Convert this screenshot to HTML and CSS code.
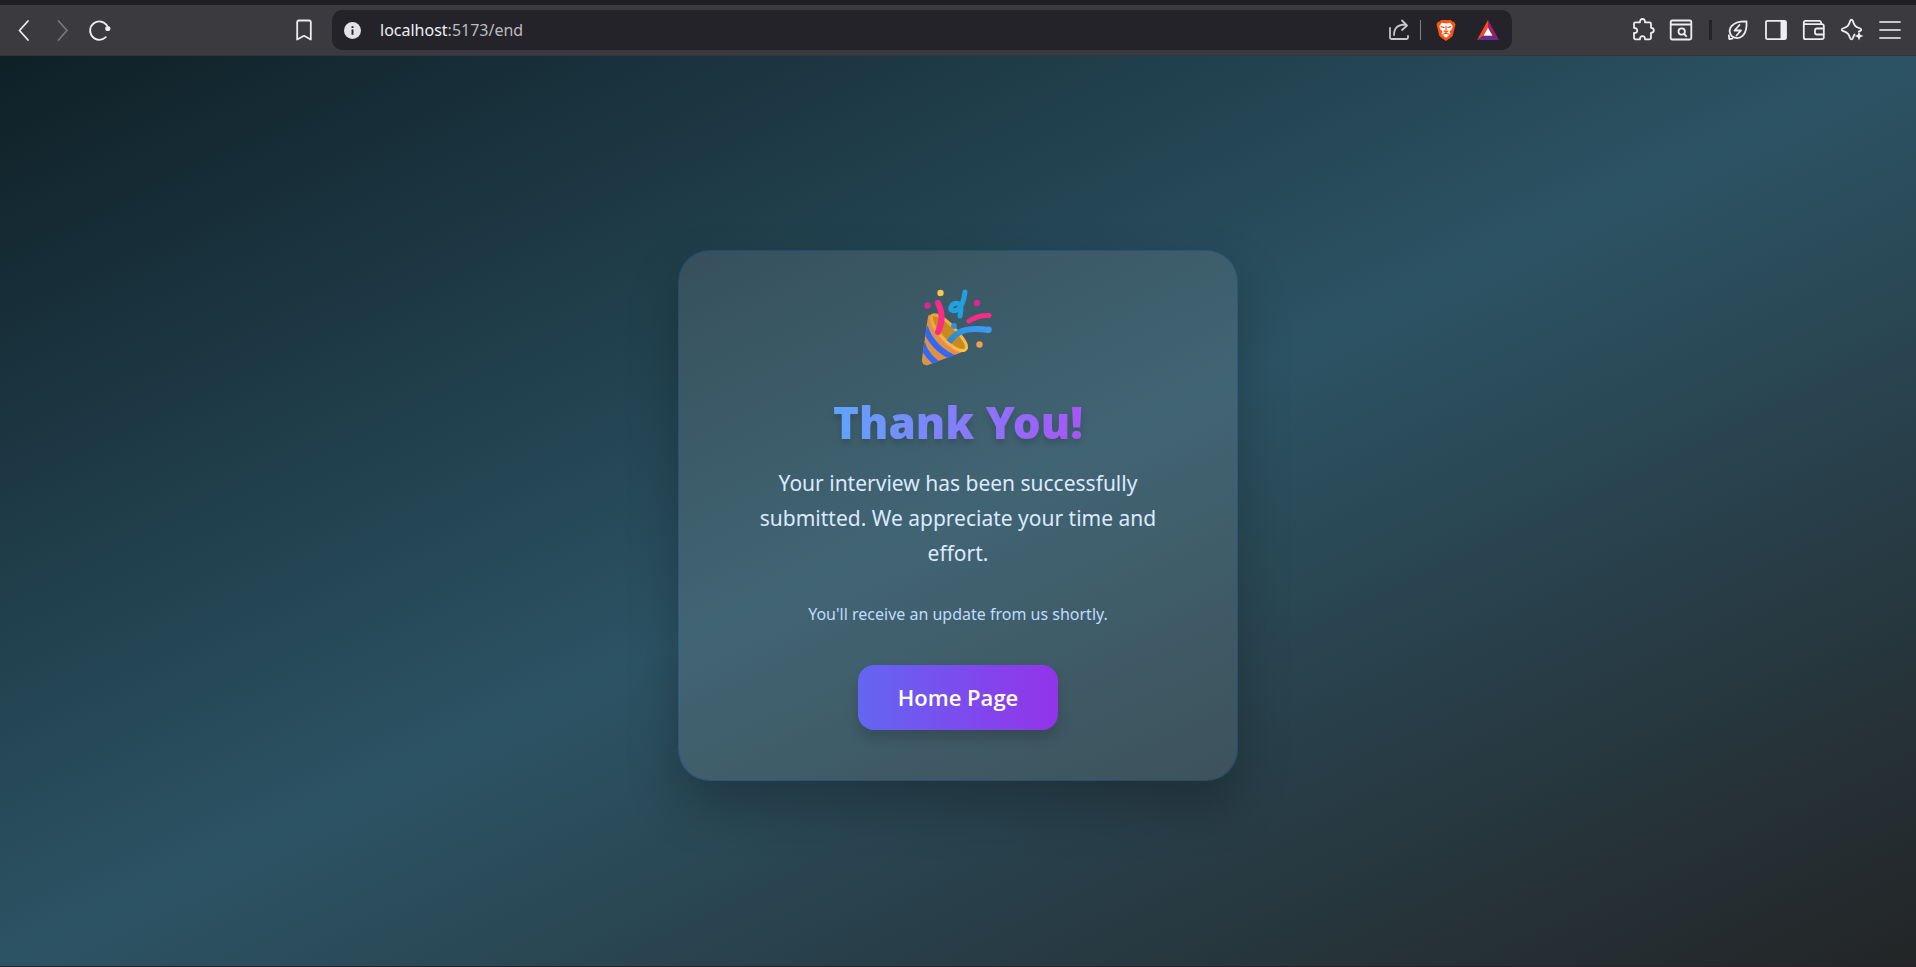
FILE: index.html
```html
<!DOCTYPE html>
<html lang="en">
<head>
<meta charset="utf-8">
<title>Thank You</title>
<link rel="stylesheet" href="styles.css">
</head>
<body>
<header class="browser-bar">
  <nav class="nav-tools" aria-label="Navigation">
    <button class="tool" aria-label="Back"><svg viewBox="0 0 24 24"><path d="M16 3 7.500 12.500 16 22"/></svg></button>
    <button class="tool tool-dim" aria-label="Forward"><svg viewBox="0 0 24 24"><path d="M8.500 3 17 12.500 8.500 22"/></svg></button>
    <button class="tool" aria-label="Reload"><svg viewBox="0 0 24 24"><path d="M17.800 19.200A9.200 9.200 0 1 1 19 7.500"/><circle class="solid" cx="19.800" cy="10.500" r="2.600"/></svg></button>
  </nav>
  <button class="tool bookmark" aria-label="Bookmark"><svg viewBox="0 0 24 24"><path d="M5.200 21.500V4.200a1.700 1.700 0 0 1 1.700-1.700h10.200a1.700 1.700 0 0 1 1.700 1.700v17.300L12 17.800z"/></svg></button>
  <div class="address">
    <button class="tool info" aria-label="Site information"><svg viewBox="0 0 16 16"><circle class="disc" cx="8" cy="8" r="8"/><path class="mark" d="M8 7v5M8 4v1.600"/></svg></button>
    <label class="url" for="url"><span class="host">localhost</span>:5173/end</label>
    <input id="url" class="url-field" type="text" aria-label="Address">
    <div class="address-tools">
      <button class="tool soft" aria-label="Share"><svg viewBox="0 0 24 24"><path d="M3 10v9.500A1.500 1.500 0 0 0 4.500 21H19.500A1.500 1.500 0 0 0 21 19.500V18M7 17c0-7 4-10.500 12-10.500M15 2.500l5 5-5 4.500"/></svg></button>
      <span class="divider"></span>
      <button class="tool shields" aria-label="Shields"><svg class="color-icon" viewBox="0 0 20 23"><path fill="#fb5412" d="M5 1h10l2 2 1.500-.2L20 6l-.7 2L17 17.500 15.500 19 10 23l-5.500-4L3 17.500.7 8 0 6l1.500-3.200L3 3z"/><path fill="#fff" d="M5.500 4 10 4.800 14.500 4 17 7.500l-.7 2.500-2.600 3.300 1 2L12.500 17.500 10 19.500 7.500 17.500 5.300 15.300l1-2L3.700 10 3 7.500z"/><path fill="none" stroke="#fb5412" stroke-width="1.200" d="M5 8l3 1M15 8l-3 1M10 7.500v6M8 12.500l2 1.500 2-1.500M7 16l3-1.200L13 16"/></svg></button>
      <button class="tool" aria-label="Rewards"><svg class="color-icon" viewBox="0 0 22 20"><path fill="#ff4724" d="M11 0 0 20l6.500-4.200L11 7.500z"/><path fill="#9e1f63" d="M11 0l11 20-6.500-4.200L11 7.500z"/><path fill="#662d91" d="M0 20h22l-6.500-4.200h-9z"/><path fill="#fff" d="m11 7.500 4.500 8.300h-9z"/></svg></button>
    </div>
  </div>
  <div class="side-tools">
    <button class="tool" aria-label="Extensions"><svg viewBox="0 0 24 24"><path d="M4.500 4.300H9c-.3-1.800.8-3.300 2.500-3.300s2.800 1.500 2.500 3.300h4.500a1.500 1.500 0 0 1 1.500 1.500v4c1.600 0 2.800 1 2.800 2.500s-1.200 2.500-2.800 2.500v5a1.500 1.500 0 0 1-1.500 1.500H14c.2-2-.9-3.200-2.500-3.200S8.800 19.300 9 21.300H4.500A1.500 1.500 0 0 1 3 19.800V15c1.900.2 3.200-.9 3.200-2.500S4.900 9.800 3 10V5.800a1.500 1.500 0 0 1 1.500-1.500z"/></svg></button>
    <button class="tool" aria-label="Find"><svg viewBox="0 0 24 24"><rect x="1.700" y="2.500" width="20.600" height="19" rx="1.500"/><path d="M2 6.500h20M15 16l2.200 2.200"/><circle cx="12.700" cy="13.500" r="3.200"/></svg></button>
    <span class="divider divider-dark"></span>
    <button class="tool" aria-label="Energy saver"><svg viewBox="0 0 24 24"><path d="M5.500 18C1 11.500 5 3 20.500 3.300 21.500 17 14 23.500 5.500 18zM2.800 17.500l.4 3.500 3.300-.4M13.500 7l-5 5.500h6.500l-4.500 5"/></svg></button>
    <button class="tool" aria-label="Sidebar"><svg viewBox="0 0 24 24"><rect x="2" y="2.800" width="20" height="18.400" rx="1.500"/><path class="solid" d="M16.500 3H22v18h-5.500z"/></svg></button>
    <button class="tool" aria-label="Wallet"><svg viewBox="0 0 24 24"><path d="M19 6V4.500A1.700 1.700 0 0 0 17.300 2.800H3.500A1.700 1.700 0 0 0 1.800 4.500v15A1.700 1.700 0 0 0 3.500 21.200H20a1.800 1.800 0 0 0 1.800-1.800V8A1.800 1.800 0 0 0 20 6.200H3.500A1.700 1.700 0 0 1 1.800 4.500M22 10.500h-7a2 2 0 0 0-2 2v2a2 2 0 0 0 2 2h7"/></svg></button>
    <button class="tool" aria-label="Assistant"><svg viewBox="0 0 24 24"><path d="M14.500 16.500c-.8 1-1.200 2.300-1.700 3.800-.5 1.300-2.100 1.300-2.600 0-1.300-4.300-2.500-5.800-7.500-7.400-1.200-.4-1.200-2 0-2.400 5-1.600 6.200-3 7.500-7.800.5-1.300 2.100-1.300 2.600 0 1.300 4.800 2.500 6.200 7.500 7.800 1.200.4 1.200 2 0 2.400l-1.500.6"/><path class="solid" d="m19 13.500 1.300 3.200 3.200 1.300-3.200 1.300L19 22.500l-1.300-3.200-3.200-1.300 3.200-1.300z"/></svg></button>
    <button class="tool soft" aria-label="Menu"><svg viewBox="0 0 24 24"><path d="M2 4h20M2 12h20M2 20h20"/></svg></button>
  </div>
</header>
<main class="page">
  <section class="card">
    <svg class="popper" viewBox="0 0 72 76" role="img" aria-label="Party popper">
      <defs>
        <linearGradient id="cone" x1="0" y1="0" x2="1" y2="0"><stop offset="0" stop-color="#d99545"/><stop offset="1" stop-color="#f5854e"/></linearGradient>
        <linearGradient id="rim" x1="0" y1="0" x2="1" y2="1"><stop offset="0" stop-color="#e9a53b"/><stop offset="1" stop-color="#ffc04a"/></linearGradient>
        <linearGradient id="blue" x1="0" y1="1" x2="1" y2="0"><stop offset="0" stop-color="#2b87c9"/><stop offset="1" stop-color="#3c9cf5"/></linearGradient>
        <clipPath id="cone-shape"><path d="M9 25C7 20 6 24 5.500 28L0 67c-.5 4 2 7 6 6l37-14C34 56 16 42 9 25z"/></clipPath>
      </defs>
      <path fill="#c98a1c" d="M9 25c2-7 14 0 25 12s13 20 7 22C31 58 12 40 9 25z"/>
      <g clip-path="url(#cone-shape)">
        <path fill="url(#cone)" d="M0 18h48v58H0z"/>
        <path fill="none" stroke="#3268f4" stroke-width="6" d="M3 35c4 13 15 26 32 32M0 51c3 10 10 18 21 24"/>
      </g>
      <path fill="none" stroke="url(#rim)" stroke-width="3" d="M9 25c3-6 14 1 24 12s15 19 9 21.500C33 60 11 41 9 25z"/>
      <path fill="none" stroke="#f82c87" stroke-width="6" stroke-linecap="round" d="M16 11c5 10 5 19 0 29"/>
      <path fill="none" stroke="url(#blue)" stroke-width="6" stroke-linecap="butt" d="M27 50c9-12 18-15 40-12"/>
      <circle cx="66.500" cy="37.800" r="3.200" fill="#3c9cf5"/>
      <path fill="none" stroke="#f82c87" stroke-width="5" stroke-linecap="round" d="M47 29c6-4 13-6 20-5.500"/>
      <path fill="none" stroke="#21a0df" stroke-width="5" stroke-linecap="round" d="M43 0c-1 9-3 15-8 18-4 2-7 0-6-3s5-5 8-3c3 3 2 7 1 12"/>
      <circle cx="18.500" cy="1" r="3.200" fill="#f2ca45"/>
      <circle cx="5.500" cy="13.500" r="3.200" fill="#dd278e"/>
      <circle cx="55" cy="11" r="3.200" fill="#dd278e"/>
      <circle cx="32" cy="34" r="3" fill="#2d92df"/>
      <circle cx="57.500" cy="52.500" r="3.200" fill="#f2a050"/>
    </svg>
    <h1 class="title">Thank You!</h1>
    <p class="message">Your interview has been successfully submitted. We appreciate your time and effort.</p>
    <p class="note">You'll receive an update from us shortly.</p>
    <button class="home">Home Page</button>
  </section>
</main>
</body>
</html>
```
FILE: styles.css
```css
* { box-sizing: border-box; }

body {
  margin: 0;
  min-height: 100vh;
  display: flex;
  flex-direction: column;
  font-family: "Noto Sans", "Open Sans", sans-serif;
}

button { border: 0; padding: 0; background: none; font: inherit; cursor: pointer; }

.browser-bar {
  display: flex;
  align-items: center;
  height: 56px;
  padding: 0 14px 0 12px;
  border-top: 5px solid #1f1e23;
  border-bottom: 1px solid #343337;
  background: #3b3a3e;
}

.tool { display: flex; align-items: center; justify-content: center; width: 24px; height: 24px; }
.tool svg {
  width: 24px;
  height: 24px;
  overflow: visible;
  fill: none;
  stroke: #eeedf2;
  stroke-width: 1.800;
  stroke-linecap: round;
  stroke-linejoin: round;
}
.tool .color-icon { width: 22px; height: 22px; stroke: none; }
.tool .solid { fill: #eeedf2; stroke: none; }
.tool-dim svg { stroke: #77767b; }
.soft svg { stroke: #c7c6cb; }

.nav-tools { display: flex; gap: 14px; }
.bookmark { margin-left: 180px; }

.address {
  position: relative;
  display: flex;
  align-items: center;
  flex: 0 1 1180px;
  height: 40px;
  margin-left: 16px;
  padding: 0 12px 0 12px;
  border-radius: 10px;
  background: #242329;
}
.info, .info svg { width: 17px; height: 17px; }
.info .disc { fill: #e3e2e8; stroke: none; }
.info .mark { stroke: #242329; stroke-linecap: butt; }
.url { margin-left: 19px; font-size: 16px; line-height: 24px; color: #bcbbc1; }
.host { color: #f0eff5; }
.url-field { position: absolute; inset: 0 130px 0 40px; border: 0; background: none; color: transparent; }
.address-tools { display: flex; align-items: center; gap: 9px; margin-left: auto; }
.address-tools .shields { margin: 0 9px 0 4px; }
.divider { width: 1px; height: 20px; background: #828187; }

.side-tools { display: flex; align-items: center; gap: 14px; margin-left: auto; }
.divider-dark { width: 3px; margin-left: 2px; background: #242329; }

.page {
  flex: 1;
  display: flex;
  align-items: center;
  justify-content: center;
  padding: 32px 24px 24px;
  border-bottom: 1px solid #27212a;
  background: linear-gradient(to bottom right, #0f2027, #2c5364, #232526);
}

.card {
  display: flex;
  flex-direction: column;
  align-items: center;
  width: 100%;
  max-width: 560px;
  padding: 41px 64px 50px;
  border: 1px solid rgba(59, 130, 246, 0.2);
  border-radius: 32px;
  background: rgba(255, 255, 255, 0.1);
  background-clip: padding-box;
  box-shadow: 0 25px 50px rgba(0, 0, 0, 0.25);
  text-align: center;
}
.popper { width: 72px; height: 76px; overflow: visible; }
.title {
  margin: 26px 0 16px;
  font-size: 44px;
  font-weight: 900;
  line-height: 56px;
  color: transparent;
  background: linear-gradient(to right, #60a5fa, #a855f7);
  background-clip: text;
  filter: drop-shadow(0 4px 3px rgba(0, 0, 0, 0.15));
}
.message { margin: 0; font-size: 21px; line-height: 35px; color: #dbeafe; }
.note { margin: 29px 0 37px; font-size: 16px; line-height: 28px; color: #bfdbfe; }
.home {
  padding: 16px 40px;
  border-radius: 16px;
  font-family: "Open Sans", sans-serif;
  font-size: 22px;
  font-weight: 600;
  line-height: 33px;
  color: #fff;
  background: linear-gradient(to right, #6366f1, #9333ea);
  box-shadow: 0 8px 12px rgba(0, 0, 0, 0.15);
}
```
